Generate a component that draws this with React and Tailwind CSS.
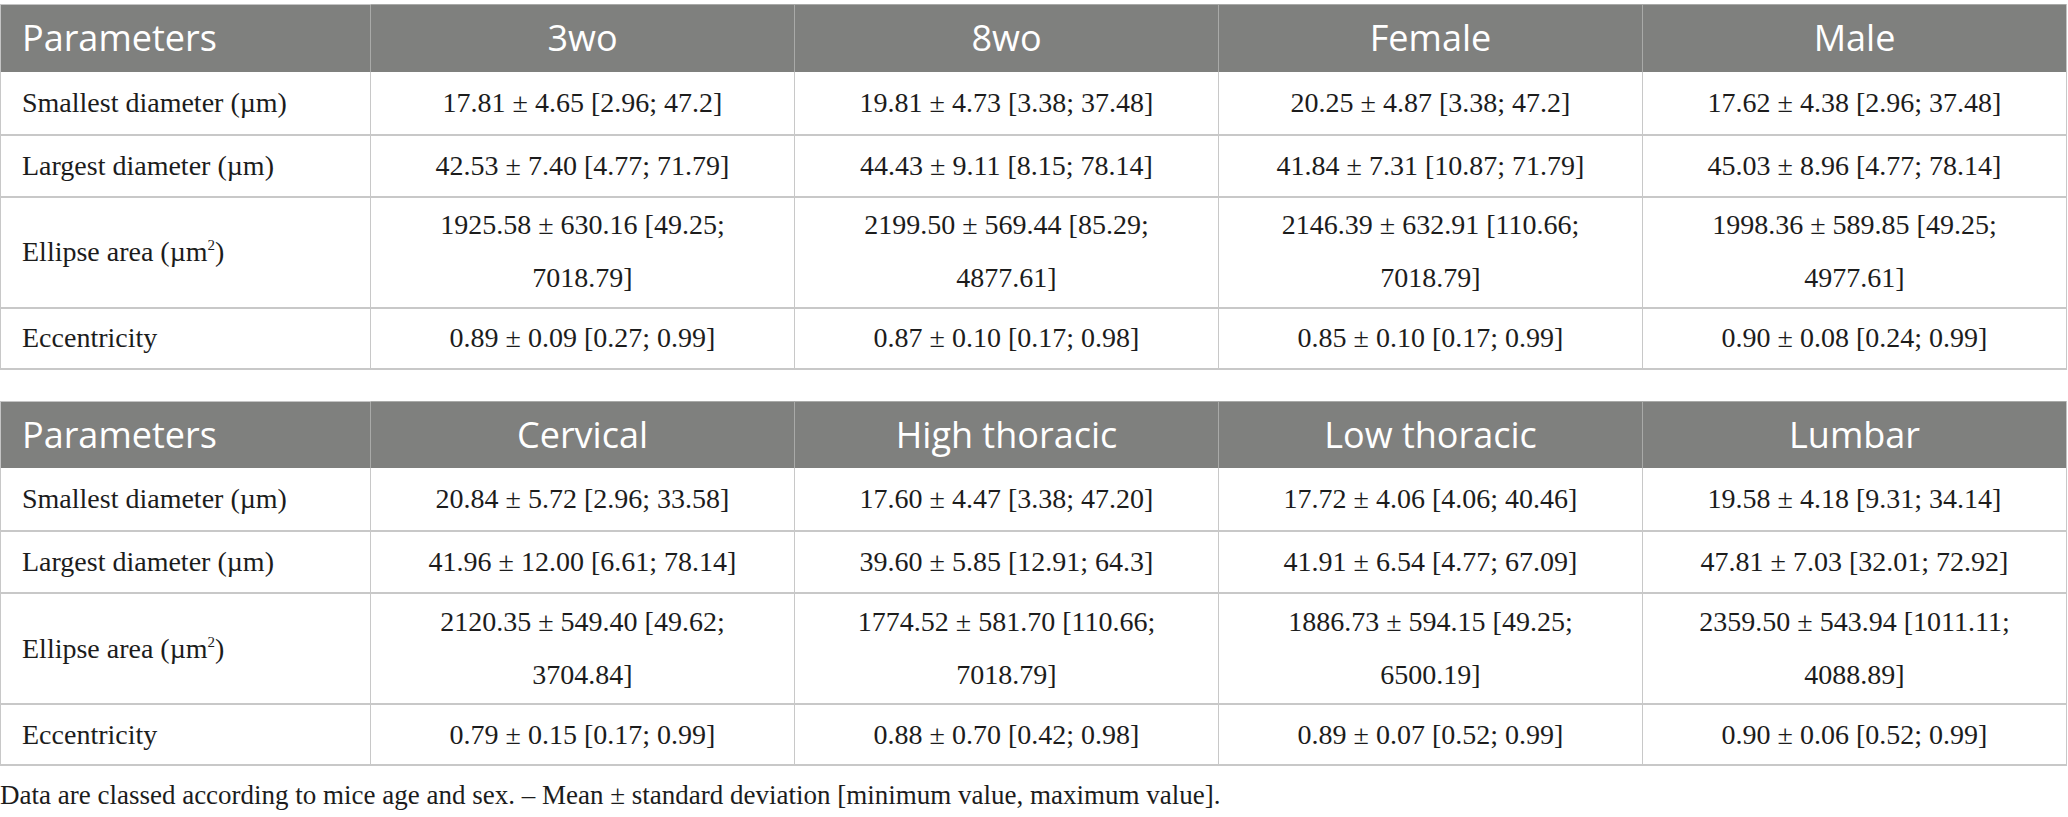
import React from 'react'

const tables = [
  {
    head: ['3wo', '8wo', 'Female', 'Male'],
    rows: [
      ['17.81 ± 4.65 [2.96; 47.2]', '19.81 ± 4.73 [3.38; 37.48]', '20.25 ± 4.87 [3.38; 47.2]', '17.62 ± 4.38 [2.96; 37.48]'],
      ['42.53 ± 7.40 [4.77; 71.79]', '44.43 ± 9.11 [8.15; 78.14]', '41.84 ± 7.31 [10.87; 71.79]', '45.03 ± 8.96 [4.77; 78.14]'],
      [
        ['1925.58 ± 630.16 [49.25;', '7018.79]'],
        ['2199.50 ± 569.44 [85.29;', '4877.61]'],
        ['2146.39 ± 632.91 [110.66;', '7018.79]'],
        ['1998.36 ± 589.85 [49.25;', '4977.61]'],
      ],
      ['0.89 ± 0.09 [0.27; 0.99]', '0.87 ± 0.10 [0.17; 0.98]', '0.85 ± 0.10 [0.17; 0.99]', '0.90 ± 0.08 [0.24; 0.99]'],
    ],
  },
  {
    head: ['Cervical', 'High thoracic', 'Low thoracic', 'Lumbar'],
    rows: [
      ['20.84 ± 5.72 [2.96; 33.58]', '17.60 ± 4.47 [3.38; 47.20]', '17.72 ± 4.06 [4.06; 40.46]', '19.58 ± 4.18 [9.31; 34.14]'],
      ['41.96 ± 12.00 [6.61; 78.14]', '39.60 ± 5.85 [12.91; 64.3]', '41.91 ± 6.54 [4.77; 67.09]', '47.81 ± 7.03 [32.01; 72.92]'],
      [
        ['2120.35 ± 549.40 [49.62;', '3704.84]'],
        ['1774.52 ± 581.70 [110.66;', '7018.79]'],
        ['1886.73 ± 594.15 [49.25;', '6500.19]'],
        ['2359.50 ± 543.94 [1011.11;', '4088.89]'],
      ],
      ['0.79 ± 0.15 [0.17; 0.99]', '0.88 ± 0.70 [0.42; 0.98]', '0.89 ± 0.07 [0.52; 0.99]', '0.90 ± 0.06 [0.52; 0.99]'],
    ],
  },
]

const labels = [
  'Smallest diameter (µm)',
  'Largest diameter (µm)',
  <>Ellipse area (µm<sup className="text-[15px] relative -top-[11px]">2</sup>)</>,
  'Eccentricity',
]

const rowHeights = ['h-[63px]', 'h-[62px]', 'h-[111px]', 'h-[61px]']

const DataTable = ({ head, rows }) => (
  <table className="w-full border-collapse table-fixed">
    <colgroup>
      <col className="w-[370px]" />
      <col />
      <col />
      <col />
      <col />
    </colgroup>
    <thead>
      <tr className="h-[67px] bg-[#7f807e] text-white text-[36px] font-['Open_Sans',sans-serif]">
        <th className="font-normal text-left pl-[21px] border-t border-l border-[#c4c4c4]">Parameters</th>
        {head.map((h) => (
          <th key={h} className="font-normal text-center border-l border-t border-[#a9aaa8] last:border-r last:border-r-[#c4c4c4]">
            {h}
          </th>
        ))}
      </tr>
    </thead>
    <tbody className="font-['Liberation_Serif',serif] text-[28px] text-[#1c1c1c]">
      {rows.map((row, i) => (
        <tr key={i} className={rowHeights[i]}>
          <td className="pl-[21px] border-x border-x-[#c8c8c8] border-b-2 border-b-[#c8c8c8]">{labels[i]}</td>
          {row.map((cell, j) => (
            <td key={j} className="text-center border-x border-x-[#c8c8c8] border-b-2 border-b-[#c8c8c8]">
              {Array.isArray(cell) ? (
                <div className="leading-[53px] pb-[2px]">
                  {cell[0]}
                  <br />
                  {cell[1]}
                </div>
              ) : (
                cell
              )}
            </td>
          ))}
        </tr>
      ))}
    </tbody>
  </table>
)

export default function App() {
  return (
    <div className="w-[2068px] min-h-[817px] bg-white pt-[4px] pr-[1px]">
      <DataTable {...tables[0]} />
      <div className="h-[31px]" />
      <DataTable {...tables[1]} />
      <p className="mt-[13px] font-['Liberation_Serif',serif] text-[27px] text-[#1c1c1c] leading-[32px]">
        Data are classed according to mice age and sex. – Mean ± standard deviation [minimum value, maximum value].
      </p>
    </div>
  )
}
